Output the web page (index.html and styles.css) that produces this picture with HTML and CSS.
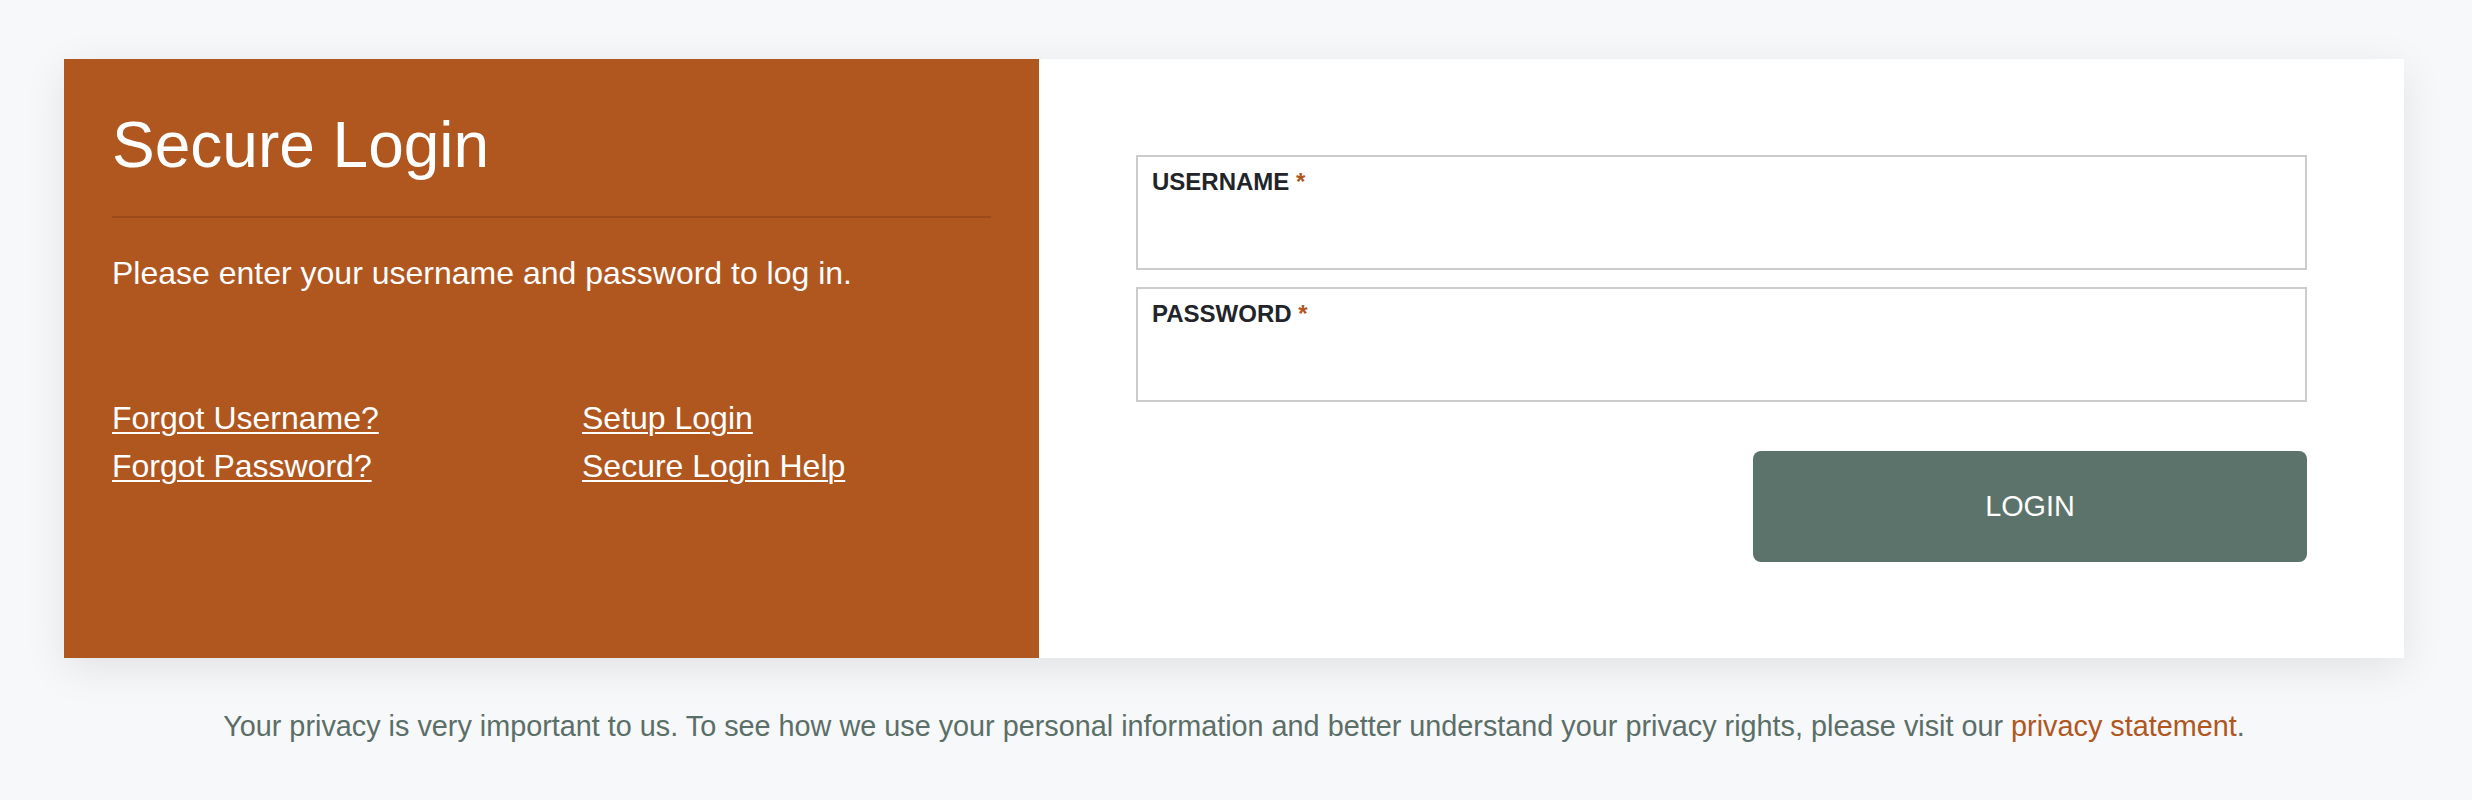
FILE: index.html
```html
<!DOCTYPE html>
<html lang="en">
<head>
<meta charset="utf-8">
<title>Secure Login</title>
<link rel="stylesheet" href="styles.css">
</head>
<body>
<main class="page">
  <section class="card">
    <div class="brand-panel">
      <h1 class="title">Secure Login</h1>
      <hr class="divider">
      <p class="intro">Please enter your username and password to log in.</p>
      <div class="links">
        <a href="#" class="link">Forgot Username?</a>
        <a href="#" class="link">Setup Login</a>
        <a href="#" class="link">Forgot Password?</a>
        <a href="#" class="link">Secure Login Help</a>
      </div>
    </div>
    <form class="form-panel">
      <label class="field">
        <span class="field-label">USERNAME <span class="req">*</span></span>
        <input class="field-input" type="text">
      </label>
      <label class="field">
        <span class="field-label">PASSWORD <span class="req">*</span></span>
        <input class="field-input" type="password">
      </label>
      <div class="actions">
        <button type="button" class="btn-login">LOGIN</button>
      </div>
    </form>
  </section>
  <p class="privacy">Your privacy is very important to us. To see how we use your personal information and better understand your privacy rights, please visit our <a href="#" class="privacy-link">privacy statement</a>.</p>
</main>
</body>
</html>
```

FILE: styles.css
```css
* { box-sizing: border-box; }

html, body {
  margin: 0;
  padding: 0;
}

body {
  background: #f6f8f9;
  font-family: "Liberation Sans", Arial, Helvetica, sans-serif;
  color: #212529;
}

.page {
  padding: 59px 68px 0 64px;
}

.card {
  display: grid;
  grid-template-columns: 975px 1fr;
  background: #ffffff;
  box-shadow: 0 10px 40px rgba(0, 0, 0, 0.09);
  height: 599px;
}

.brand-panel {
  background: #b0561f;
  color: #ffffff;
  padding: 48px;
}

.title {
  margin: 0;
  font-size: 64px;
  font-weight: 400;
  line-height: 1.2;
}

.divider {
  margin: 32px 0 31px;
  border: 0;
  border-top: 2px solid #9d4a1b;
  height: 0;
}

.intro {
  margin: 0 0 97px;
  font-size: 32px;
  line-height: 48px;
}

.links {
  display: grid;
  grid-template-columns: 470px 1fr;
  font-size: 32px;
  line-height: 48px;
}

.link {
  color: #ffffff;
  text-decoration: underline;
  text-decoration-thickness: 2px;
  text-underline-offset: 3px;
  justify-self: start;
}

.form-panel {
  padding: 96px 97px;
  display: flex;
  flex-direction: column;
  gap: 17px;
}

.field {
  display: flex;
  flex-direction: column;
  height: 115px;
  border: 2px solid #cccccc;
  padding: 11px 14px;
}

.field-label {
  font-size: 24px;
  font-weight: 700;
  line-height: 1.2;
  color: #212529;
}

.req {
  color: #b0561f;
}

.field-input {
  flex: 1;
  border: 0;
  outline: none;
  background: transparent;
  font: inherit;
  font-size: 24px;
  padding: 0;
}

.actions {
  display: flex;
  justify-content: flex-end;
  margin-top: 32px;
}

.btn-login {
  width: 554px;
  height: 111px;
  border: 0;
  border-radius: 8px;
  background: #5c736b;
  color: #ffffff;
  font-family: inherit;
  font-size: 28.8px;
  letter-spacing: 0;
}

.privacy {
  margin: 47px 0 0;
  text-align: center;
  font-size: 28.8px;
  line-height: 1.5;
  color: #5b6e68;
}

.privacy-link {
  color: #b0561f;
  text-decoration: none;
}
```
